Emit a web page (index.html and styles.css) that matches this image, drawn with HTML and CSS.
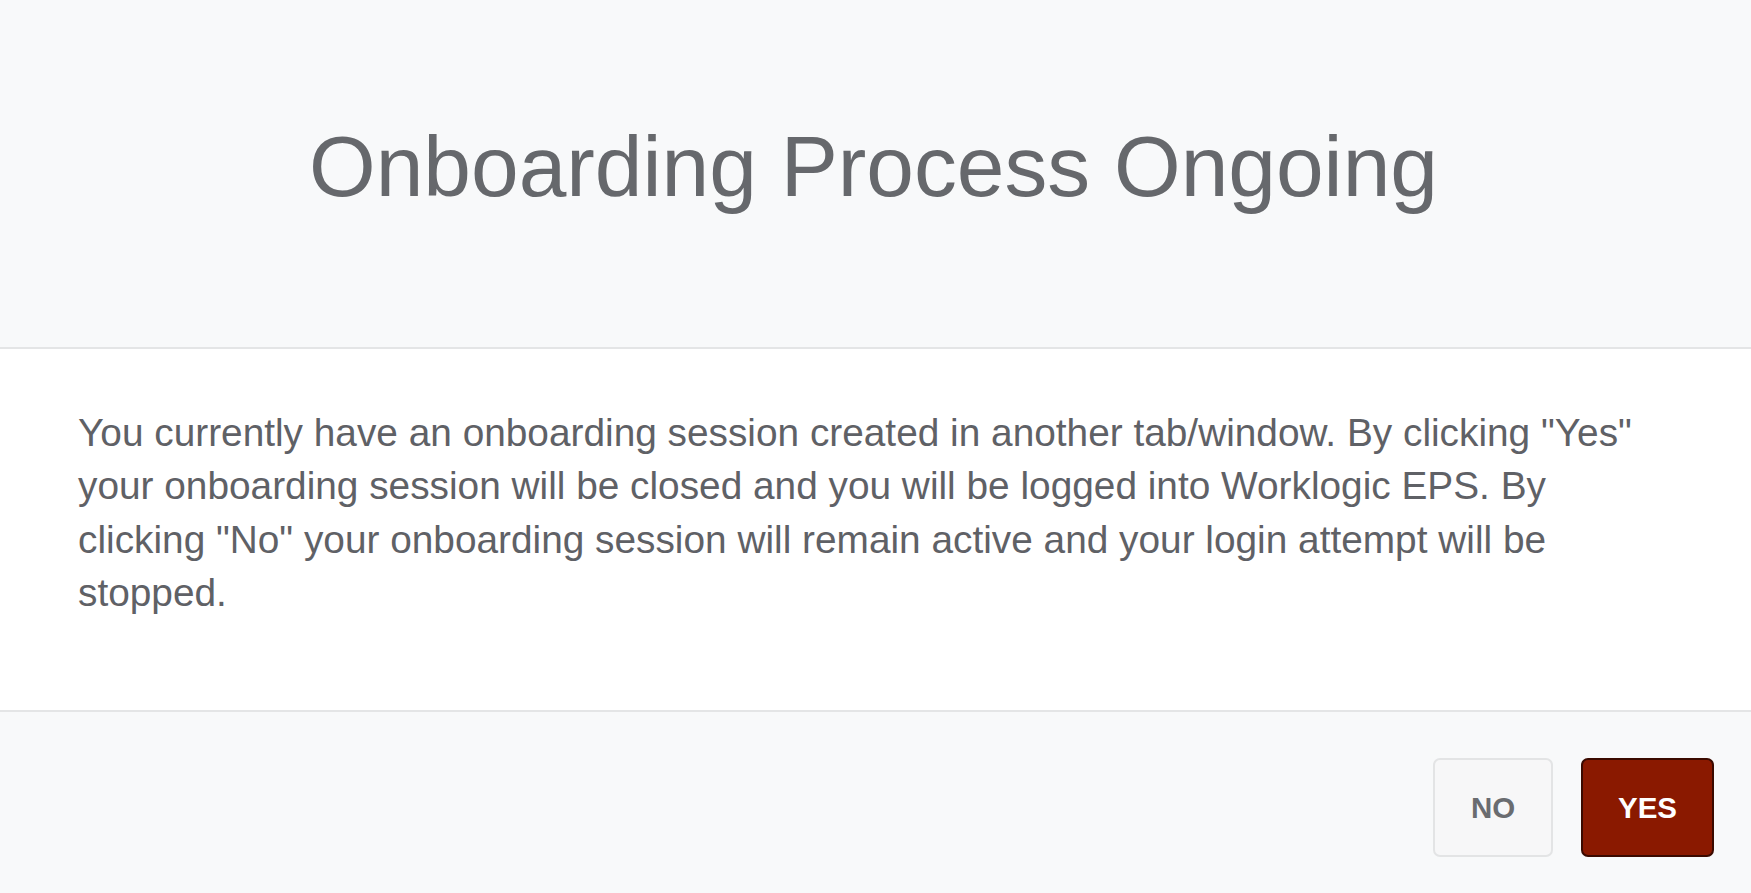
FILE: index.html
```html
<!DOCTYPE html>
<html>
<head>
<meta charset="utf-8">
<link rel="stylesheet" href="styles.css">
</head>
<body>
<div class="modal">
  <div class="modal-header">
    <h1 class="modal-title">Onboarding Process Ongoing</h1>
  </div>
  <div class="modal-body">
    <p class="message">You currently have an onboarding session created in another tab/window. By clicking "Yes" your onboarding session will be closed and you will be logged into Worklogic EPS. By clicking "No" your onboarding session will remain active and your login attempt will be stopped.</p>
  </div>
  <div class="modal-footer">
    <button class="btn btn-no">NO</button>
    <button class="btn btn-yes">YES</button>
  </div>
</div>
</body>
</html>
```
FILE: styles.css
```css
html, body {
  margin: 0;
  padding: 0;
  height: 100%;
}
body {
  font-family: "Liberation Sans", Arial, Helvetica, sans-serif;
  background: #f8f9fa;
}
.modal {
  display: flex;
  flex-direction: column;
  height: 893px;
}
.modal-header {
  height: 349px;
  box-sizing: border-box;
  background: #f8f9fa;
  border-bottom: 2px solid #e4e5e6;
  display: flex;
  align-items: center;
  justify-content: center;
  padding-bottom: 14px;
  padding-right: 4px;
}
.modal-title {
  margin: 0;
  font-size: 85.7px;
  font-weight: 400;
  color: #66686c;
  line-height: 1;
}
.modal-body {
  background: #ffffff;
  padding: 57px 100px 0 78px;
  height: 363px;
  box-sizing: border-box;
  border-bottom: 2px solid #e4e5e6;
}
.message {
  margin: 0;
  font-size: 38.8px;
  line-height: 53.4px;
  color: #5f6166;
}
.modal-footer {
  flex: 1;
  background: #f8f9fa;
  display: flex;
  justify-content: flex-end;
  align-items: flex-start;
  gap: 28px;
  padding: 46px 37px 0 0;
}
.btn {
  font-family: "Liberation Sans", Arial, Helvetica, sans-serif;
  font-weight: 700;
  font-size: 29.5px;
  height: 99px;
  border-radius: 7px;
  box-sizing: border-box;
  padding: 0;
  cursor: pointer;
}
.btn-no {
  width: 120px;
  background: #f7f7f8;
  color: #6a6c70;
  border: 2px solid #e3e4e5;
}
.btn-yes {
  width: 133px;
  background: #8a1900;
  color: #ffffff;
  border: 2px solid #3b0a00;
}
```
